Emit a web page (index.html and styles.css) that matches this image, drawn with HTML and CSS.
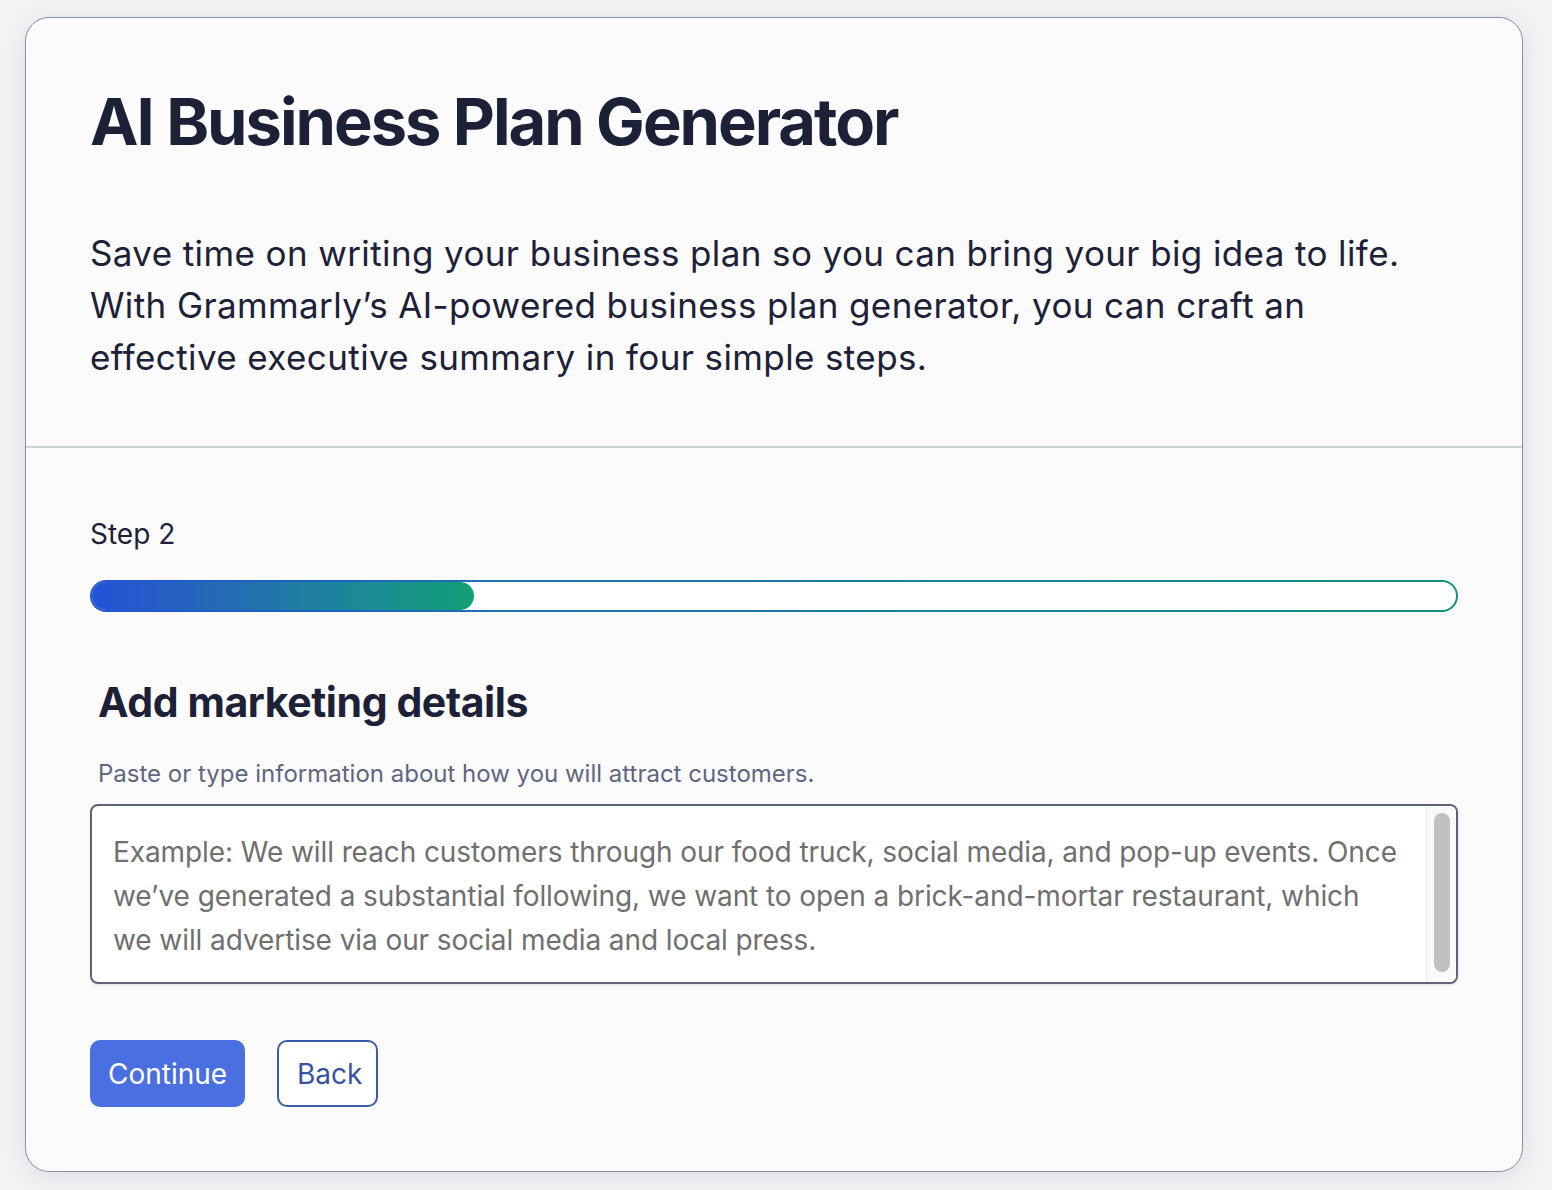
FILE: index.html
```html
<!DOCTYPE html>
<html lang="en">
<head>
<meta charset="utf-8">
<title>AI Business Plan Generator</title>
<link rel="stylesheet" href="styles.css">
</head>
<body>
<main class="card">
  <section class="intro">
    <h1 class="title">AI Business Plan Generator</h1>
    <p class="lead">Save time on writing your business plan so you can bring your big idea to life. With Grammarly’s AI-powered business plan generator, you can craft an effective executive summary in four simple steps.</p>
  </section>
  <section class="form">
    <div class="step">Step 2</div>
    <div class="progress"><div class="progress-fill" style="width: 28%"></div></div>
    <h2 class="form-title">Add marketing details</h2>
    <label class="hint" for="details">Paste or type information about how you will attract customers.</label>
    <div class="field">
      <textarea id="details" class="input" placeholder="Example: We will reach customers through our food truck, social media, and pop-up events. Once we’ve generated a substantial following, we want to open a brick-and-mortar restaurant, which we will advertise via our social media and local press."></textarea>
      <div class="scroll-track"><div class="scroll-thumb"></div></div>
    </div>
    <div class="actions">
      <button class="btn btn-primary">Continue</button>
      <button class="btn btn-secondary">Back</button>
    </div>
  </section>
</main>
</body>
</html>
```
FILE: styles.css
```css
* { box-sizing: border-box; }
html, body { margin: 0; padding: 0; }
body {
  background: #f4f4f6;
  font-family: Inter, "Noto Sans", "Liberation Sans", sans-serif;
  color: #1d2137;
  padding: 17px 29px 18px 25px;
}
.card {
  width: 1498px;
  height: 1155px;
  background: #fbfbfc;
  border: 1px solid #8b8fa3;
  border-radius: 24px;
  box-shadow: 0 4px 24px rgba(40, 44, 80, 0.12);
  display: flex;
  flex-direction: column;
}
.intro {
  padding: 62px 64px 63px 64px;
  border-bottom: 2px solid #d0d2db;
}
.title {
  margin: 0;
  font-size: 65px;
  line-height: 84px;
  font-weight: 700;
  letter-spacing: -0.031em;
  color: #1d2137;
}
.lead {
  margin: 63px 0 0 0;
  font-size: 35px;
  line-height: 52px;
  font-weight: 400;
  letter-spacing: 0.011em;
  color: #1d2137;
  max-width: 1360px;
}
.form {
  padding: 66px 64px 0 64px;
  display: flex;
  flex-direction: column;
}
.step {
  font-size: 28px;
  line-height: 40px;
  color: #1d2137;
}
.progress {
  margin-top: 26px;
  height: 32px;
  border-radius: 16px;
  padding: 2px;
  background: linear-gradient(90deg, #2555cf 0%, #1f72b0 35%, #178f7e 100%);
  position: relative;
}
.progress::before {
  content: "";
  position: absolute;
  inset: 2px;
  border-radius: 14px;
  background: #ffffff;
}
.progress-fill {
  position: relative;
  height: 100%;
  border-radius: 14px;
  background: linear-gradient(90deg, #2451d8 0%, #2667b8 30%, #1e809f 60%, #10a078 100%);
}
.form-title {
  margin: 64px 0 0 8px;
  font-size: 41px;
  line-height: 52px;
  font-weight: 700;
  letter-spacing: -0.01em;
  color: #1d2137;
}
.hint {
  margin: 30px 0 0 8px;
  font-size: 24px;
  line-height: 32px;
  color: #5e6680;
}
.field {
  margin-top: 14px;
  height: 180px;
  border: 2px solid #5d6479;
  border-radius: 8px;
  background: #ffffff;
  display: flex;
  overflow: hidden;
  box-shadow: 0 1px 3px rgba(0,0,0,0.12);
}
.input {
  flex: 1;
  border: none;
  outline: none;
  resize: none;
  background: transparent;
  font-family: inherit;
  font-size: 28px;
  line-height: 44px;
  letter-spacing: -0.003em;
  padding: 24px 26px 16px 21px;
  color: #1d2137;
}
.input::placeholder { color: #6f6f6f; opacity: 1; }
.scroll-track {
  width: 30px;
  border-left: 1px solid #e6e6e6;
  background: #fafafa;
  padding: 7px 6px 10px 7px;
}
.scroll-thumb {
  height: 100%;
  border-radius: 8px;
  background: #c1c1c1;
}
.actions {
  margin-top: 56px;
  display: flex;
  gap: 32px;
}
.btn {
  font-family: inherit;
  font-size: 28px;
  height: 67px;
  border-radius: 10px;
  padding: 0 18px;
  cursor: pointer;
}
.btn-primary {
  background: #4a6fe0;
  color: #ffffff;
  border: none;
  width: 155px;
}
.btn-secondary {
  background: #ffffff;
  color: #3953a3;
  border: 2px solid #3d5aa8;
  width: 101px;
}
```
